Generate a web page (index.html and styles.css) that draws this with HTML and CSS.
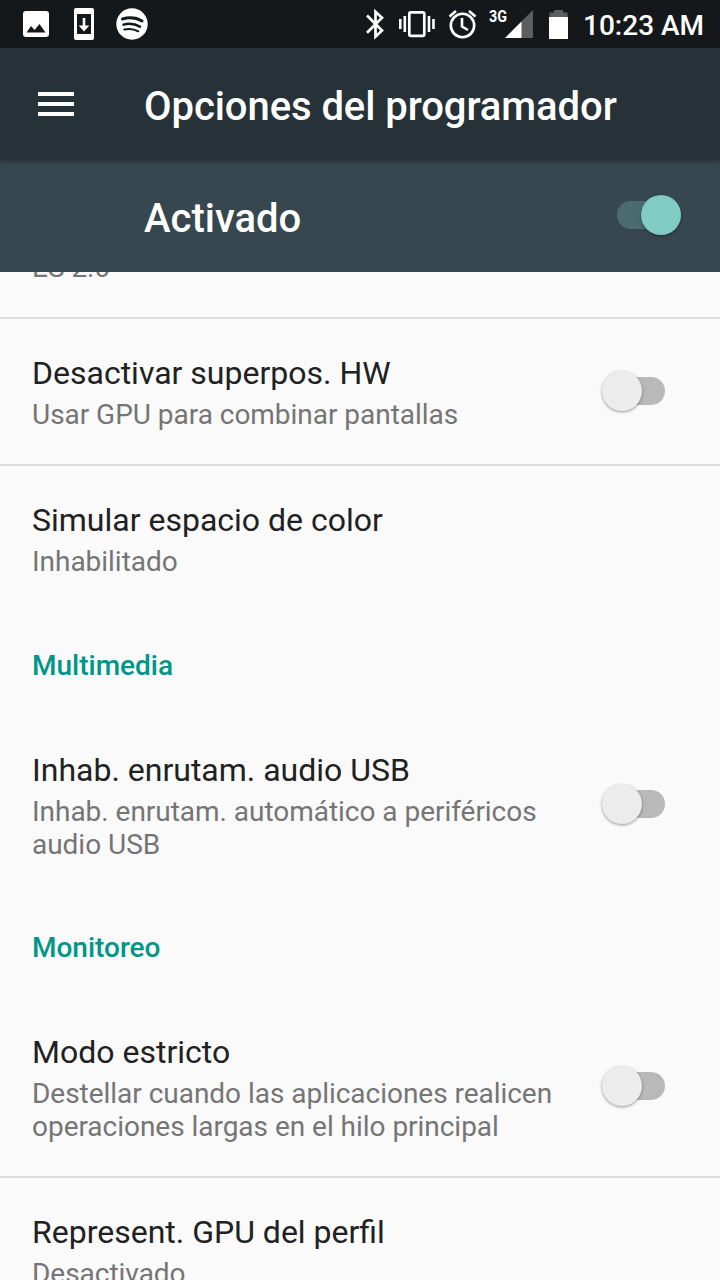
FILE: index.html
```html
<!DOCTYPE html>
<html lang="es">
<head>
    <meta charset="UTF-8">
    <meta name="viewport" content="width=device-width, initial-scale=1.0">
    <title>Opciones del programador</title>
    <link rel="stylesheet" href="styles.css">
</head>
<body>
    <div class="status-bar">
        <svg class="status-icons" width="580" height="48" viewBox="0 0 580 48">
            <!-- picture -->
            <path fill="#fff" fill-rule="evenodd" d="M26 11h20q3 0 3 3v20q0 3-3 3H26q-3 0-3-3V14q0-3 3-3zM26.500 32.500h19l-6-8.500-5 6-3.500-4z"/>
            <!-- system update -->
            <path fill="#fff" fill-rule="evenodd" d="M76 8h16q2 0 2 2v28q0 2-2 2H76q-2 0-2-2V10q0-2 2-2zM77 14v20h14V14z"/>
            <path fill="#fff" d="M82.700 18h2.600v7.500h4L84 31.500l-5.300-6h4z"/>
            <!-- spotify -->
            <circle cx="132" cy="24" r="15.700" fill="#fff"/>
            <g fill="none" stroke="#14181b" stroke-linecap="round">
                <path stroke-width="3" d="M122.500 19c6-1.800 14-1.200 19.500 2"/>
                <path stroke-width="2.500" d="M123.500 24.600c5.500-1.500 11.500-.8 16.500 2"/>
                <path stroke-width="2" d="M124.300 29.500c5-1.100 10-.5 14 1.800"/>
            </g>
            <!-- bluetooth -->
            <path fill="none" stroke="#fff" stroke-width="2.700" d="M367 15.500l15 15-6.500 6.200V11.800l6.500 6-15 15"/>
            <!-- vibrate -->
            <rect x="409.300" y="12.300" width="15" height="23.500" rx="1.500" fill="none" stroke="#fff" stroke-width="2.700"/>
            <path fill="none" stroke="#fff" stroke-width="2.600" d="M400.300 19v10M404.800 16v16M429 16v16M433.500 19v10"/>
            <!-- alarm -->
            <g fill="none" stroke="#fff" stroke-width="2.600">
                <circle cx="462.500" cy="25.500" r="11.700"/>
                <path d="M462 18v8.500l6 3.500M449.500 16.500l6.500-5.500M475.500 16.500l-6.500-5.500"/>
            </g>
            <!-- signal -->
            <path fill="#5b5e60" d="M533 10v28h-28z"/>
            <path fill="#fff" d="M521.500 21.500V38H505z"/>
            <text class="network" x="489" y="22" textLength="18" lengthAdjust="spacingAndGlyphs">3G</text>
            <!-- battery -->
            <path fill="#5b5e60" d="M549.500 12.500h4.500V10h9v2.500h4.500V18h-18z"/>
            <path fill="#fff" d="M549 17h19v22h-19z"/>
        </svg>
        <span class="clock">10:23 AM</span>
    </div>

    <header class="toolbar">
        <div class="menu">
            <span></span>
            <span></span>
            <span></span>
        </div>
        <h1>Opciones del programador</h1>
    </header>

    <div class="switch-bar">
        <span>Activado</span>
        <div class="switch on"><div class="thumb"></div></div>
    </div>

    <main class="list">
        <div class="row divider cut">
            <div class="text">
                <div class="summary">ES 2.0</div>
            </div>
        </div>
        <div class="row divider">
            <div class="text">
                <div class="title">Desactivar superpos. HW</div>
                <div class="summary">Usar GPU para combinar pantallas</div>
            </div>
            <div class="switch"><div class="thumb"></div></div>
        </div>
        <div class="row">
            <div class="text">
                <div class="title">Simular espacio de color</div>
                <div class="summary">Inhabilitado</div>
            </div>
        </div>
        <h2>Multimedia</h2>
        <div class="row">
            <div class="text">
                <div class="title">Inhab. enrutam. audio USB</div>
                <div class="summary">Inhab. enrutam. automático a periféricos audio USB</div>
            </div>
            <div class="switch"><div class="thumb"></div></div>
        </div>
        <h2>Monitoreo</h2>
        <div class="row divider">
            <div class="text">
                <div class="title">Modo estricto</div>
                <div class="summary">Destellar cuando las aplicaciones realicen operaciones largas en el hilo principal</div>
            </div>
            <div class="switch"><div class="thumb"></div></div>
        </div>
        <div class="row">
            <div class="text">
                <div class="title">Represent. GPU del perfil</div>
                <div class="summary">Desactivado</div>
            </div>
        </div>
    </main>
</body>
</html>
```
FILE: styles.css
```css
* {
    box-sizing: border-box;
}
body {
    margin: 0;
    height: 1280px;
    display: flex;
    flex-direction: column;
    overflow: hidden;
    font-family: Roboto, sans-serif;
    background-color: #fafafa;
}
.status-bar {
    flex: none;
    display: flex;
    align-items: center;
    height: 48px;
    background-color: #14181b;
    color: #fff;
}
.status-icons {
    flex: none;
}
.network {
    font-size: 16px;
    font-weight: 700;
    fill: #fff;
}
.clock {
    margin-left: 3px;
    padding-top: 2px;
    font-size: 28px;
    font-weight: 500;
    white-space: nowrap;
}
.toolbar {
    flex: none;
    display: flex;
    align-items: center;
    height: 112px;
    padding-left: 38px;
    background-color: #263238;
    color: #fff;
    box-shadow: 0 1px 5px rgba(0, 0, 0, 0.4);
    z-index: 1;
}
.menu {
    display: flex;
    flex-direction: column;
    gap: 6px;
    width: 36px;
    margin-right: 70px;
}
.menu span {
    height: 4px;
    background-color: #fff;
}
h1 {
    margin: 0;
    padding-top: 4px;
    font-size: 40px;
    font-weight: 500;
    letter-spacing: -0.07px;
}
.switch-bar {
    flex: none;
    display: flex;
    align-items: center;
    justify-content: space-between;
    height: 112px;
    padding: 4px 39px 0 144px;
    background-color: #37474f;
    color: #fff;
    font-size: 40px;
    font-weight: 500;
}
.list {
    flex: 1;
    min-height: 0;
    overflow: hidden;
}
.row {
    display: flex;
    align-items: center;
    justify-content: space-between;
    padding: 35px 55px 33px 32px;
}
.divider {
    border-bottom: 2px solid #dcdcdc;
}
/* scrolled under the switch bar */
.cut {
    margin-top: -56px;
}
.text {
    width: 540px;
}
.title {
    margin-bottom: 5px;
    font-size: 32px;
    line-height: 39px;
    color: #212121;
}
.summary {
    font-size: 28px;
    line-height: 33px;
    letter-spacing: -0.03px;
    color: #757575;
}
h2 {
    margin: 0;
    padding: 37.5px 32px 34px;
    font-size: 28px;
    font-weight: 500;
    line-height: 33px;
    color: #009688;
}
.switch {
    flex: none;
    display: flex;
    align-items: center;
    width: 64px;
    height: 28px;
    margin-bottom: 4px;
    border-radius: 14px;
    background: linear-gradient(#b9b9b9, #b9b9b9) right / 50px 28px no-repeat;
}
.thumb {
    width: 40px;
    height: 40px;
    border-radius: 50%;
    background-color: #ececec;
    box-shadow: 0 1px 3px rgba(0, 0, 0, 0.4);
}
.row .thumb {
    margin-left: 1px;
}
.switch.on {
    justify-content: flex-end;
    margin-bottom: 6px;
    background: #4c6b70;
}
.on .thumb {
    background-color: #80cbc4;
}
```
